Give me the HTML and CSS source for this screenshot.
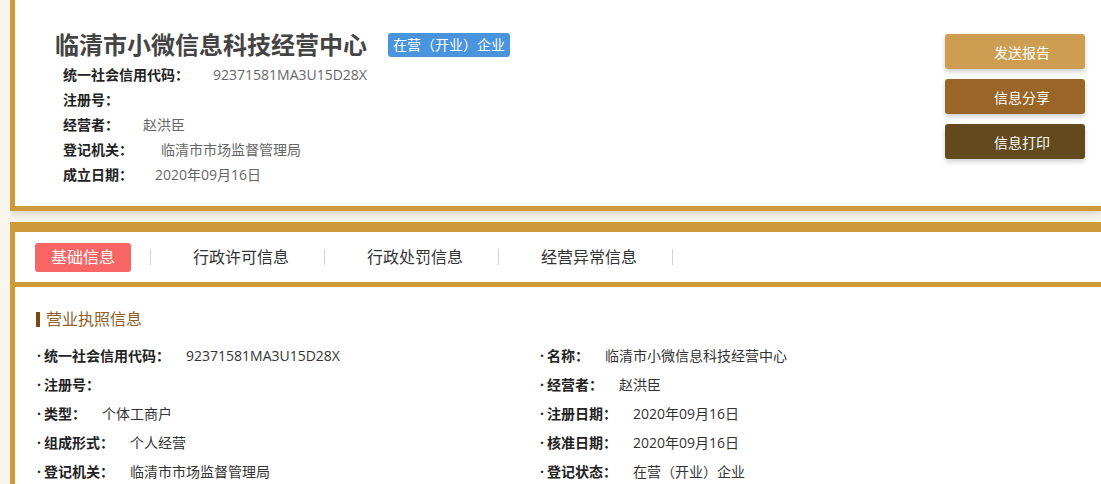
FILE: index.html
```html
<!DOCTYPE html>
<html lang="zh-CN">
<head>
  <meta charset="UTF-8">
  <meta name="viewport" content="width=device-width, initial-scale=1.0">
  <title>临清市小微信息科技经营中心</title>
  <link rel="stylesheet" href="styles.css">
</head>
<body>
  <header class="top-card">
    <div class="summary">
      <div class="title-row">
        <h1 class="company">临清市小微信息科技经营中心</h1>
        <span class="status">在营（开业）企业</span>
      </div>
      <ul class="facts">
        <li><b>统一社会信用代码：</b><span>92371581MA3U15D28X</span></li>
        <li><b>注册号：</b><span></span></li>
        <li><b>经营者：</b><span>赵洪臣</span></li>
        <li><b>登记机关：</b><span class="wide">临清市市场监督管理局</span></li>
        <li><b>成立日期：</b><span class="narrow">2020年09月16日</span></li>
      </ul>
    </div>
    <div class="actions">
      <button class="btn btn-report">发送报告</button>
      <button class="btn btn-share">信息分享</button>
      <button class="btn btn-print">信息打印</button>
    </div>
  </header>

  <section class="detail-card">
    <ul class="tabs">
      <li><a class="active" href="#">基础信息</a></li>
      <li><a href="#">行政许可信息</a></li>
      <li><a href="#">行政处罚信息</a></li>
      <li><a href="#">经营异常信息</a></li>
    </ul>
    <div class="detail-body">
      <h3 class="block-title">营业执照信息</h3>
      <ul class="info-grid">
        <li><b>统一社会信用代码：</b><span>92371581MA3U15D28X</span></li>
        <li><b>名称：</b><span>临清市小微信息科技经营中心</span></li>
        <li><b>注册号：</b><span></span></li>
        <li><b>经营者：</b><span>赵洪臣</span></li>
        <li><b>类型：</b><span>个体工商户</span></li>
        <li><b>注册日期：</b><span>2020年09月16日</span></li>
        <li><b>组成形式：</b><span>个人经营</span></li>
        <li><b>核准日期：</b><span>2020年09月16日</span></li>
        <li><b>登记机关：</b><span>临清市市场监督管理局</span></li>
        <li><b>登记状态：</b><span>在营（开业）企业</span></li>
      </ul>
    </div>
  </section>
</body>
</html>
```

FILE: styles.css
```css
html {
  overflow: hidden;
}
body {
  font-family: "Open Sans", "Noto Sans CJK SC", sans-serif;
  background-color: #f9f6ee;
  margin: 0 0 0 10px;
  padding: 0;
  color: #333;
}
ul {
  list-style: none;
  margin: 0;
  padding: 0;
}

/* top card */
.top-card {
  display: flex;
  justify-content: space-between;
  background: #fff;
  border-left: 5px solid #cc9a39;
  border-bottom: 5px solid #cc9a39;
  box-shadow: 0 3px 8px rgba(0,0,0,0.15);
}
.summary {
  padding: 30px 0 19px 40px;
}
.title-row {
  display: flex;
  align-items: center;
  height: 30px;
}
.company {
  margin: 0;
  font-size: 24px;
  line-height: 30px;
  font-weight: bold;
  color: #444;
}
.status {
  margin-left: 21px;
  padding: 0 5px;
  height: 24px;
  line-height: 24px;
  font-size: 14px;
  color: #fff;
  background: #4a94de;
  border-radius: 3px;
}
.facts {
  margin-top: 2px;
  padding-left: 8px;
}
.facts li {
  font-size: 14px;
  line-height: 25px;
}
.facts b {
  color: #222;
}
.facts span {
  margin-left: 24px;
  color: #666;
}
.facts span.wide {
  margin-left: 28px;
}
.facts span.narrow {
  margin-left: 22px;
}
.actions {
  display: flex;
  flex-direction: column;
  gap: 10px;
  padding-top: 34px;
  margin-right: 16px;
}
.btn {
  width: 140px;
  height: 35px;
  padding: 0 0 0 14px;
  border: none;
  border-radius: 3px;
  font-family: inherit;
  font-size: 14px;
  color: #fff;
  box-shadow: 0 3px 5px rgba(0,0,0,0.18);
  cursor: pointer;
}
.btn-report {
  background: #cd9e52;
}
.btn-share {
  background: #9a6628;
}
.btn-print {
  background: #62491e;
}

/* detail card */
.detail-card {
  margin-top: 11px;
  background: #fff;
  border-top: 10px solid #cc9a39;
  border-left: 5px solid #cc9a39;
}
.tabs {
  display: flex;
  align-items: center;
  height: 50px;
  padding-left: 20px;
  border-bottom: 5px solid #cc9a39;
}
.tabs li {
  display: flex;
  align-items: center;
}
.tabs li::after {
  content: "";
  width: 1px;
  height: 16px;
  background: #d0d0d0;
  margin-left: 19px;
  margin-right: 26px;
}
.tabs a {
  display: block;
  padding: 0 16px;
  height: 29px;
  line-height: 29px;
  font-size: 16px;
  color: #333;
  text-decoration: none;
  border-radius: 3px;
}
.tabs a.active {
  background: #f76565;
  color: #fff;
}
.detail-body {
  padding: 22px 0 20px 21px;
}
.block-title {
  display: flex;
  align-items: center;
  margin: 0;
  font-size: 16px;
  line-height: 20px;
  font-weight: normal;
  color: #8f5f27;
}
.block-title::before {
  content: "";
  width: 4px;
  height: 15px;
  background: #7b4a12;
  margin-right: 6px;
}
.info-grid {
  display: grid;
  grid-template-columns: 503px 1fr;
  margin-top: 12px;
  padding-left: 1px;
}
.info-grid li {
  font-size: 14px;
  line-height: 29px;
}
.info-grid li::before {
  content: "·";
  display: inline-block;
  width: 7px;
  font-weight: bold;
  color: #222;
}
.info-grid b {
  color: #222;
}
.info-grid span {
  margin-left: 16px;
  color: #333;
}
```
